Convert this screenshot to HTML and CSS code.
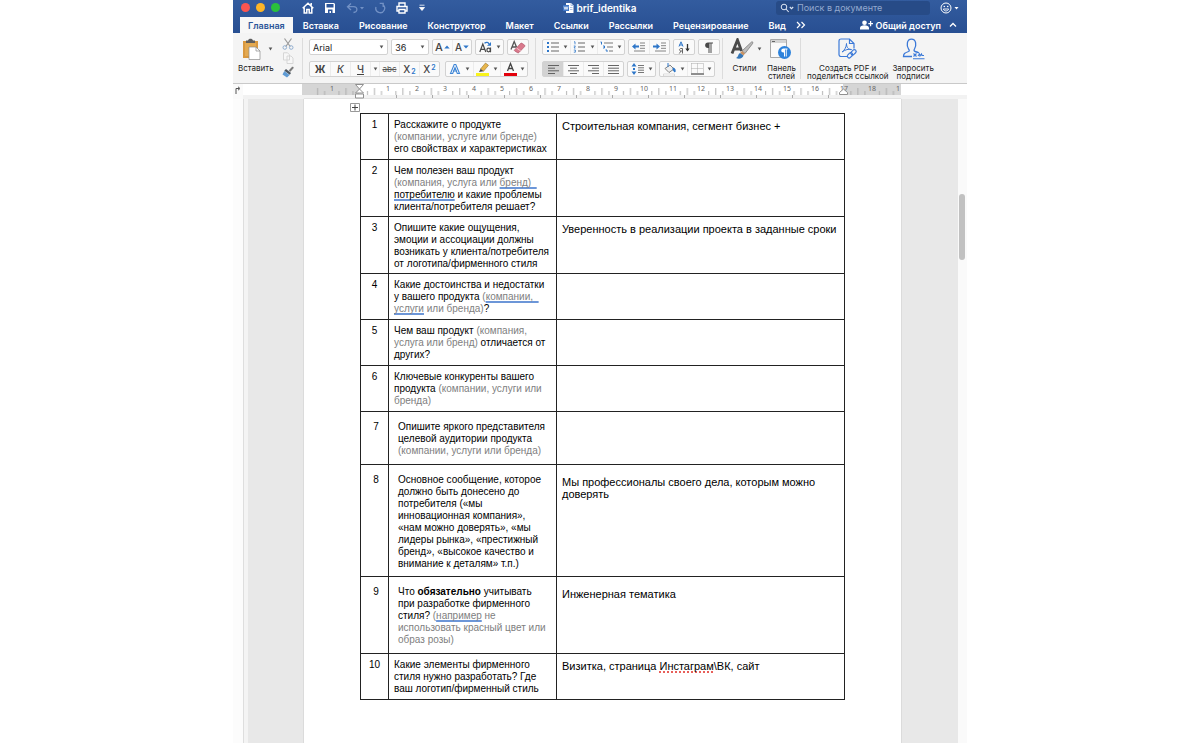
FILE: index.html
```html
<!DOCTYPE html>
<html lang="ru">
<head>
<meta charset="utf-8">
<meta name="viewport" content="width=device-width, initial-scale=1">
<title>brif_identika</title>
<link rel="stylesheet" href="styles.css">
</head>
<body>
<div class="window">
  <header class="chrome">
    <div class="titlebar">
      <div class="title-left">
        <div class="lights"><button class="light red" aria-label="Закрыть"></button><button class="light yellow" aria-label="Свернуть"></button><button class="light green" aria-label="Развернуть"></button></div>
        <div class="quick">
          <button aria-label="Домой"><svg width="12" height="12" viewBox="0 0 12 12"><path d="M.7 6.3 6 1.3l5.300 5M2.200 5.500v5.600h2.600V7.500h2.400v3.600h2.600V5.500M9.200 1v2.500" fill="none" stroke="#fff" stroke-width="1.500"/></svg></button>
          <button aria-label="Сохранить"><svg width="12" height="12" viewBox="0 0 12 12"><path d="M1 1h9l1 1v9H1z" fill="#fff"/><path d="M2.500 2h7v3.500h-7zM4 7.500h4.500V11H7V9H5.500v2H4z" fill="#2d569b"/></svg></button>
          <button class="undo" aria-label="Отменить"><svg width="18" height="12" viewBox="0 0 18 12"><path d="M5 1.500 1.500 4.700 5 8M2 4.700h5.500c4.500 0 4.500 5.800 0 5.800" fill="none" stroke="#7291c5" stroke-width="1.300"/><path d="M14 5h4l-2 2.500z" fill="#7291c5"/></svg></button>
          <button aria-label="Повторить"><svg width="12" height="12" viewBox="0 0 12 12"><path d="M3.500 2.500A4.400 4.400 0 1 0 10 5M6.300 1.300H2.800V5" fill="none" stroke="#7291c5" stroke-width="1.300" transform="matrix(-1 0 0 1 12 0)"/></svg></button>
          <button aria-label="Печать"><svg width="12" height="12" viewBox="0 0 12 12"><path d="M3 4V1h6v3M3 9H1V4.500h10V9H9M3 7.500h6V11H3z" fill="none" stroke="#fff" stroke-width="1.400"/></svg></button>
          <button aria-label="Настроить панель"><svg width="8" height="8" viewBox="0 0 8 8"><path d="M1.500 1.200h5M1.500 3.500h5L4 6.500z" fill="#fff" stroke="#fff" stroke-width=".8"/></svg></button>
        </div>
      </div>
      <div class="doc-title">
        <svg width="11" height="12" viewBox="0 0 11 12"><path d="M3 1h5l2.500 2.500V11H3z" fill="#fff"/><path d="M8 1v2.500h2.500M7 5.500h2.500M7 7.500h2.500" fill="none" stroke="#9ab3dc" stroke-width=".8"/><path d="M0 3h6v6H0z" fill="#3f76c6"/><path d="m1 4.500 1 3 1-2.800 1 2.800 1-3" fill="none" stroke="#fff" stroke-width=".8"/></svg>
        <span>brif_identika</span>
      </div>
      <div class="title-right">
        <label class="search"><svg width="14" height="10" viewBox="0 0 14 10"><circle cx="4" cy="4" r="2.800" fill="none" stroke="#dfe7f4"/><path d="m6 6 2.700 3M9.800 4l1.700 1.700L13.200 4" fill="none" stroke="#dfe7f4" stroke-width="1.100"/></svg><input type="search" placeholder="Поиск в документе" aria-label="Поиск в документе"></label>
        <button aria-label="Отзыв"><svg width="19" height="12" viewBox="0 0 19 12"><circle cx="6" cy="6" r="5" fill="none" stroke="#fff"/><path d="M3.300 7c1 2.600 4.400 2.600 5.400 0z" fill="none" stroke="#fff" stroke-width=".9"/><circle cx="4.300" cy="4.500" r=".8" fill="#fff"/><circle cx="7.700" cy="4.500" r=".8" fill="#fff"/><path d="M14.500 5h4l-2 2.500z" fill="#fff"/></svg></button>
      </div>
    </div>
    <nav class="tabs">
      <button class="tab active">Главная</button><button class="tab">Вставка</button><button class="tab">Рисование</button><button class="tab">Конструктор</button><button class="tab">Макет</button><button class="tab">Ссылки</button><button class="tab">Рассылки</button><button class="tab">Рецензирование</button><button class="tab">Вид</button>
      <button class="more" aria-label="Ещё вкладки"><svg width="10" height="8" viewBox="0 0 10 8"><path d="m1 1 3 3-3 3M5.500 1l3 3-3 3" fill="none" stroke="#fff" stroke-width="1.200"/></svg></button>
      <button class="share"><svg width="13" height="10" viewBox="0 0 13 10"><circle cx="4.500" cy="2.700" r="2.300" fill="#fff"/><path d="M0 9.500V8c0-2 2-2.800 4.500-2.800S9 6 9 8v1.500zM10 1h1.200v2H13v1.200h-1.800v2H10v-2H8.300V3H10z" fill="#fff"/></svg>Общий доступ</button>
      <button class="fold" aria-label="Свернуть ленту"><svg width="8" height="6" viewBox="0 0 8 6"><path d="m1 4.500 3-3 3 3" fill="none" stroke="#fff" stroke-width="1.300"/></svg></button>
    </nav>
  </header>

  <svg class="defs" aria-hidden="true"><defs>
    <symbol id="arr" viewBox="0 0 5 4"><path d="M.7.500h3.600L2.500 3.500z" fill="#555"/></symbol>
  </defs></svg>

  <section class="ribbon" aria-label="Главная">
    <div class="group clip">
      <button class="big paste">
        <span class="pic"><svg width="20" height="22" viewBox="0 0 20 22"><path d="M1 3h15v17H1z" fill="#d9983f"/><path d="M3 5h11v13H3z" fill="#e3a951"/><path d="M4 5V2.500h2C6.500 0 10.500 0 11 2.500h2V5z" fill="#5d5d5d"/><path d="M7 9h7l4 4v8.500H7z" fill="#fff" stroke="#8b8b8b" stroke-width=".7"/><path d="M14 9v4h4" fill="none" stroke="#8b8b8b" stroke-width=".7"/></svg><svg class="arr"><use href="#arr"/></svg></span>
        <span>Вставить</span>
      </button>
      <div class="minis">
        <button aria-label="Вырезать"><svg width="12" height="12" viewBox="0 0 12 12"><path d="m2.500.5 5.700 8M9.500.5 3.800 8.500" stroke="#9b9b9b" stroke-width="1.200"/><circle cx="2.800" cy="9.500" r="1.800" fill="none" stroke="#91aed0"/><circle cx="9.200" cy="9.500" r="1.800" fill="none" stroke="#91aed0"/></svg></button>
        <button aria-label="Копировать"><svg width="12" height="12" viewBox="0 0 12 12"><path d="M1.500.8h4l2 2V8h-6zM5 4h4l2 2v5.500H5z" fill="#f7f7f7" stroke="#d2d2d2" stroke-width=".9"/></svg></button>
        <button aria-label="Формат по образцу"><svg width="12" height="12" viewBox="0 0 12 12"><path d="M7 4.500 10.500.8l1 1L8.300 5.500z" fill="#777" stroke="#666" stroke-width=".5"/><path d="m4 3 5 4-1.200 1.700-5.500-4z" fill="#4a5560"/><path d="m2.300 5 5.300 3.900L5 11.500.5 8.500z" fill="#5f9bd4"/></svg></button>
      </div>
    </div>

    <div class="group rows font">
      <div class="row">
        <label class="combo face"><select aria-label="Шрифт"><option>Arial</option></select><svg class="arr"><use href="#arr"/></svg></label>
        <label class="combo size"><select aria-label="Размер шрифта"><option>36</option></select><svg class="arr"><use href="#arr"/></svg></label>
        <div class="set"><button class="narrow ltr large" aria-label="Увеличить">A<svg width="6" height="4" viewBox="0 0 6 4"><path d="M.3 3.500 3 .5l2.700 3z" fill="#2d76c9"/></svg></button><button class="narrow ltr" aria-label="Уменьшить">A<svg width="6" height="4" viewBox="0 0 6 4"><path d="M.3.500h5.400L3 3.500z" fill="#2d76c9"/></svg></button></div>
        <div class="set"><button class="menu" aria-label="Регистр"><svg width="14" height="12" viewBox="0 0 14 12"><path d="M.8 11 3.800 3l3 8M1.900 8.300h3.800" fill="none" stroke="#4a4a4a" stroke-width="1.200"/><ellipse cx="9.600" cy="9" rx="1.700" ry="1.800" fill="none" stroke="#4a4a4a" stroke-width="1.200"/><path d="M11.500 6.500v4.800" fill="none" stroke="#4a4a4a" stroke-width="1.200"/><path d="M5.500 2.300c2-1.500 3.500-1 4.500.5" fill="none" stroke="#2d76c9" stroke-width="1.400"/><path d="M12 1v3.800H8z" fill="#2d76c9"/></svg><svg class="arr"><use href="#arr"/></svg></button></div>
        <div class="set"><button class="plain" aria-label="Очистить формат"><svg width="16" height="14" viewBox="0 0 16 14"><path d="M1 9.500 4.200 1.500l2.500 6M2 7h4" fill="none" stroke="#555" stroke-width="1.300"/><path d="m4.500 10 6-6.500c.5-.5 1-.5 1.500-.2L14.500 5c.5.500.5 1 .2 1.500L9 12.500c-.5.500-1 .5-1.500.2L4.700 11c-.4-.3-.5-.6-.2-1z" fill="#d9798c" stroke="#a84e62" stroke-width=".6"/><path d="m6.500 8 4.300 3" stroke="#f4c3cc"/></svg></button></div>
      </div>
      <div class="row">
        <div class="set"><button class="plain ltr"><b>Ж</b></button><button class="plain ltr"><i>К</i></button><button class="plain ltr"><u>Ч</u></button><button class="slim" aria-label="Вид подчёркивания"><svg class="arr"><use href="#arr"/></svg></button><button class="plain strike"><s>abc</s></button><button class="plain ltr">X<sub>2</sub></button><button class="plain ltr">X<sup>2</sup></button></div>
        <div class="set"><button class="menu" aria-label="Эффекты текста"><svg width="13" height="12" viewBox="0 0 13 12"><path d="M1.500 10.500 5.200 1.500h1.600l3.700 9H8.300L6 4.500l-2.300 6z" fill="#fff" stroke="#3f86d6" stroke-width="1.100"/><path d="M4 8h4" stroke="#3f86d6"/></svg><svg class="arr"><use href="#arr"/></svg></button><button class="menu" aria-label="Цвет выделения"><svg width="14" height="14" viewBox="0 0 14 14"><path d="M0 11h13v3H0z" fill="#f8f31c"/><path d="m4.500 7 5-6 3 2.300-5 6z" fill="#e8b64d" stroke="#806020" stroke-width=".5"/><path d="M4.500 7 3 10l4.500-.7z" fill="#444"/></svg><svg class="arr"><use href="#arr"/></svg></button><button class="menu" aria-label="Цвет текста"><svg width="13" height="14" viewBox="0 0 13 14"><path d="M0 11h13v3H0z" fill="#e3000b"/><path d="m3.500 9 3-7.500 3 7.500M4.500 6.500h4" fill="none" stroke="#444" stroke-width="1.300"/></svg><svg class="arr"><use href="#arr"/></svg></button></div>
      </div>
    </div>

    <div class="group rows para">
      <div class="row">
        <div class="set"><button class="menu" aria-label="Маркеры"><svg width="14" height="12" viewBox="0 0 14 12"><path d="M1 1h2v2H1zM1 5h2v2H1zM1 9h2v2H1z" fill="#2d76c9"/><path d="M5 2h8M5 6h8M5 10h8" stroke="#666"/></svg><svg class="arr"><use href="#arr"/></svg></button><button class="menu" aria-label="Нумерация"><svg width="14" height="12" viewBox="0 0 14 12"><path d="M1 .8h1v2.500M.8 5h1.600L1 7h1.500M.8 9h1.600v2.200H.8" fill="none" stroke="#2d76c9" stroke-width=".8"/><path d="M5 2h7M5 6h7M5 10h7" stroke="#666"/></svg><svg class="arr"><use href="#arr"/></svg></button><button class="menu" aria-label="Многоуровневый список"><svg width="14" height="12" viewBox="0 0 14 12"><path d="M.5 1h1v2.500M3 5h1.500v2H3M5.500 9H7v2" fill="none" stroke="#2d76c9"/><path d="M4 2h9M7 6h6M9 10h4" stroke="#777"/></svg><svg class="arr"><use href="#arr"/></svg></button></div>
        <div class="set"><button class="plain" aria-label="Уменьшить отступ"><svg width="14" height="10" viewBox="0 0 14 10"><path d="M8 1h5M8 3.700h5M8 6.300h5M2 9h11" stroke="#777" stroke-width=".9"/><path d="m0 4.500 3.500-3v2H7v2H3.500v2z" fill="#2d76c9"/></svg></button><button class="plain" aria-label="Увеличить отступ"><svg width="14" height="10" viewBox="0 0 14 10"><path d="M8 1h5M8 3.700h5M8 6.300h5M2 9h11" stroke="#777" stroke-width=".9"/><path d="M7 4.500 3.500 1.500v2H0v2h3.500v2z" fill="#2d76c9"/></svg></button></div>
        <div class="set"><button class="plain" aria-label="Сортировка"><svg width="13" height="13" viewBox="0 0 13 13"><path d="M1 5.500 3 .8l2 4.700M1.500 4h3" fill="none" stroke="#2d76c9"/><path d="M4.500 12.500v-5H3c-2 0-2 2.500 0 2.500h1.500M3 10l-1.700 2.500" fill="none" stroke="#666"/><path d="M9.500 3v6" stroke="#333" stroke-width="1.300"/><path d="M7.300 7.500h4.400L9.500 10.500z" fill="#333"/></svg></button></div>
        <div class="set"><button class="plain" aria-label="Непечатаемые знаки"><svg width="10" height="11" viewBox="0 0 10 11"><path d="M9 .5H4C.2.5.2 6 4 6h.5v5h1V1.500h1V11h1V1.500H9z" fill="#4a4a4a"/></svg></button></div>
      </div>
      <div class="row">
        <div class="set"><button class="plain on" aria-label="По левому краю"><svg width="11" height="9" viewBox="0 0 11 9"><path d="M0 .500h11M0 3.200h7M0 5.800h11M0 8.500h7" stroke="#555" stroke-width=".9"/></svg></button><button class="plain" aria-label="По центру"><svg width="11" height="9" viewBox="0 0 11 9"><path d="M0 .500h11M2 3.200h7M0 5.800h11M2 8.500h7" stroke="#555" stroke-width=".9"/></svg></button><button class="plain" aria-label="По правому краю"><svg width="11" height="9" viewBox="0 0 11 9"><path d="M0 .500h11M4 3.200h7M0 5.800h11M4 8.500h7" stroke="#555" stroke-width=".9"/></svg></button><button class="plain" aria-label="По ширине"><svg width="11" height="9" viewBox="0 0 11 9"><path d="M0 .500h11M0 3.200h11M0 5.800h11M0 8.500h11" stroke="#555" stroke-width=".9"/></svg></button></div>
        <div class="set"><button class="menu" aria-label="Интервал"><svg width="14" height="12" viewBox="0 0 14 12"><path d="M3 0 5.500 3.500h-5zM3 12 .5 8.500h5zM2 5h2v2H2z" fill="#2d76c9"/><path d="M7 2.500h6M7 4.800h6M7 7.200h6M7 9.500h6" stroke="#666" stroke-width=".9"/></svg><svg class="arr"><use href="#arr"/></svg></button></div>
        <div class="set"><button class="menu" aria-label="Заливка"><svg width="14" height="13" viewBox="0 0 14 13"><path d="m2 5.500 5-3.500 4 4-5 3.500z" fill="#eee" stroke="#777" stroke-width=".9"/><path d="M5 4V0M10 5c2 0 2.500 2 2 4-1.500-.5-2-2-2-4z" stroke="#2d76c9" fill="#2d76c9"/><path d="M.5 11h11v2H.5z" fill="#fff" stroke="#bbb" stroke-width=".5"/></svg><svg class="arr"><use href="#arr"/></svg></button><button class="menu" aria-label="Границы"><svg width="13" height="12" viewBox="0 0 13 12"><path d="M.500.500h12M.500.500v10M12.500.500v10M6.500.500v10M.500 5.500h12" fill="none" stroke="#aaa" stroke-dasharray="1 1"/><path d="M0 11h13" stroke="#444" stroke-width="1.200"/></svg><svg class="arr"><use href="#arr"/></svg></button></div>
      </div>
    </div>

    <div class="group styles">
      <button class="big st"><span class="pic"><svg width="24" height="22" viewBox="0 0 24 22"><path d="M2 15.500 7.500 2l4 11M4 11h6.500" fill="none" stroke="#4a4a4a" stroke-width="2.800"/><path d="m12 13 9.500-9c1.500-.5 1.700.5 1 1.700L15 15.500z" fill="#bdbdbd" stroke="#707070" stroke-width=".7"/><path d="m12 13 3 2.500-1.500 2-3.500-2.500z" fill="#c99262"/><path d="M10 15c-2 1-1.500 4-4 5 3 1.500 7 .5 7.500-2.500z" fill="#3477b8"/></svg><svg class="arr"><use href="#arr"/></svg></span><span>Стили</span></button>
      <button class="big pane"><span class="pic"><svg width="22" height="22" viewBox="0 0 22 22"><path d="M.5 1.500h16v18H.5z" fill="#fafafa" stroke="#a8a8a8"/><path d="M1 2h15v3H1z" fill="#d4d4d4"/><path d="M2 3.500h3" stroke="#666"/><circle cx="14.500" cy="14.500" r="6.500" fill="#2c82dc"/><path d="M17.500 10.500h-4c-3 0-3 4 0 4h.5v4h1v-7h.8v7h.9v-7h.8z" fill="#fff"/></svg></span><span>Панель<br>стилей</span></button>
    </div>

    <div class="group adobe">
      <button class="big pdf"><span class="pic"><svg width="20" height="22" viewBox="0 0 20 22"><path d="M9 18.500H3c-1 0-2-.7-2-2V3c0-1.300 1-2 2-2h8.500L16 5.500v5M11.500 1v4.500H16" fill="none" stroke="#3b79d8" stroke-width="1.200"/><path d="M4 14c2-1 4.500-5 4.500-8.500 0 4 2 6.500 5 6-3-.8-6 .2-9.500 2.500z" fill="none" stroke="#3b79d8"/><g fill="none" stroke="#3b79d8" stroke-width="1.200"><rect x="9" y="15.500" width="6" height="3.600" rx="1.800" transform="rotate(-45 12 17.300)"/><rect x="12.500" y="12.500" width="6" height="3.600" rx="1.800" transform="rotate(-45 15.500 14.300)"/></g></svg></span><span>Создать PDF и<br>поделиться ссылкой</span></button>
      <button class="big sign"><span class="pic"><svg width="23" height="22" viewBox="0 0 23 22"><path d="M10 18.500H1.500c0-3 1-3.500 5-5 1-.5 1-1.500 0-2.500C4.500 8 4.500 1.200 9.500 1.200S14.500 8 12.500 11c-.8 1.200-.5 2 .5 2.500 1.500.4 3 .8 4 1.500" fill="none" stroke="#3b79d8" stroke-width="1.300"/><path d="m11.500 15.500 3 3m0-3-3 3M16 18l1.500-2 .5 2 1.500-2 .5 1.500H22M11 20.800h11.500" fill="none" stroke="#3b79d8" stroke-width="1.100"/></svg></span><span>Запросить<br>подписи</span></button>
    </div>
  </section>

  <div class="ruler">
    <div class="tabstop"><svg width="6" height="8" viewBox="0 0 6 8"><path d="M1 8V2.500h3M3 .800l2 1.700-2 1.700" fill="none" stroke="#555"/></svg></div>
    <div class="scale">
      <svg width="599" height="16" viewBox="0 0 599 16">
        <defs><pattern id="ticks" x="58" width="28.440" height="11" patternUnits="userSpaceOnUse"><path d="M7.500 7v4M14.500 4v7M21.500 7v4" stroke="#a8a8a8" stroke-width=".9"/></pattern>
        <pattern id="tabs" x="22" y="11" width="36" height="5" patternUnits="userSpaceOnUse"><path d="M.5 0v3" stroke="#aaa"/></pattern></defs>
        <rect width="599" height="11" fill="#fff"/><rect width="57" height="11" fill="#d5d5d5"/><rect x="541" width="58" height="11" fill="#d5d5d5"/>
        <rect x="14" width="585" height="11" fill="url(#ticks)"/><rect x="92" y="11" width="450" height="4" fill="url(#tabs)"/>
        <g class="nums"><text x="30" y="7">1</text><text x="86" y="7">1</text><text x="115" y="7">2</text><text x="143" y="7">3</text><text x="172" y="7">4</text><text x="200" y="7">5</text><text x="229" y="7">6</text><text x="257" y="7">7</text><text x="286" y="7">8</text><text x="314" y="7">9</text><text x="342" y="7">10</text><text x="371" y="7">11</text><text x="399" y="7">12</text><text x="428" y="7">13</text><text x="456" y="7">14</text><text x="485" y="7">15</text><text x="513" y="7">16</text><text x="542" y="7">17</text><text x="570" y="7">18</text><text x="596" y="7">1</text></g>
        <path d="M53.500.500h8L57.500 5zM57.500 5l4 4h-8zM53.500 10h8v4h-8z" fill="#fff" stroke="#909090"/><path d="m541.500 5 4 3.500v2h-8v-2z" fill="#fff" stroke="#909090"/>
      </svg>
    </div>
  </div>

  <main class="work">
    <div class="vruler"></div>
    <div class="desk">
      <article class="page">
        <svg class="handle" width="10" height="9" viewBox="0 0 10 9"><path d="M.500.500h9v8h-9z" fill="#fff" stroke="#999"/><path d="M5 1.500v6M2 4.500h6" stroke="#444"/></svg>
        <table class="brief">
          <colgroup><col class="c-num"><col class="c-q"><col></colgroup>
          <tbody>
          <tr class="l3"><td>1</td><td>Расскажите о продукте<br><em>(компании, услуге или бренде)</em><br>его свойствах и характеристиках</td><td>Строительная компания, сегмент бизнес +</td></tr>
          <tr class="l4"><td>2</td><td>Чем полезен ваш продукт<br><em>(компания, услуга или <span class="gram">бренд)&nbsp;&nbsp;</span></em><br><span class="gram">потребителю</span> и какие проблемы<br>клиента/потребителя решает?</td><td></td></tr>
          <tr class="l4"><td>3</td><td>Опишите какие ощущения,<br>эмоции и ассоциации должны<br>возникать у клиента/потребителя<br>от логотипа/фирменного стиля</td><td>Уверенность в реализации проекта в заданные сроки</td></tr>
          <tr class="l3"><td>4</td><td>Какие достоинства и недостатки<br>у вашего продукта <em>(<span class="gram">компании,&nbsp;&nbsp;</span></em><br><em><span class="gram">услуги</span> или бренда)</em>?</td><td></td></tr>
          <tr class="l3"><td>5</td><td>Чем ваш продукт <em>(компания,<br>услуга или бренд)</em> отличается от<br>других?</td><td></td></tr>
          <tr class="l3"><td>6</td><td>Ключевые конкуренты вашего<br>продукта <em>(компании, услуги или<br>бренда)</em></td><td></td></tr>
          <tr class="inset"><td>7</td><td>Опишите яркого представителя<br>целевой аудитории продукта<br><em>(компании, услуги или бренда)</em></td><td></td></tr>
          <tr class="inset l8"><td>8</td><td>Основное сообщение, которое<br>должно быть донесено до<br>потребителя («мы<br>инновационная компания»,<br>«нам можно доверять», «мы<br>лидеры рынка», «престижный<br>бренд», «высокое качество и<br>внимание к деталям» т.п.)</td><td>Мы профессионалы своего дела, которым можно доверять</td></tr>
          <tr class="inset l5"><td>9</td><td>Что <b>обязательно</b> учитывать<br>при разработке фирменного<br>стиля? <em>(<span class="gram">например</span> не<br>использовать красный цвет или<br>образ розы)</em></td><td>Инженерная тематика</td></tr>
          <tr class="l3"><td>10</td><td>Какие элементы фирменного<br>стиля нужно разработать? Где<br>ваш логотип/фирменный стиль</td><td>Визитка, страница <span class="spell">Инстаграм</span>\ВК, сайт</td></tr>
          </tbody>
        </table>
      </article>
    </div>
    <div class="scroll"><div class="thumb"></div></div>
  </main>
</div>
</body>
</html>
```

FILE: styles.css
```css
* { box-sizing: border-box; }
body { margin: 0; background: #fff; font-family: Inter, "Noto Sans", sans-serif; font-size: 8px; color: #222; }
button { margin: 0; padding: 0; border: 0; background: none; font: inherit; color: inherit; display: flex; align-items: center; justify-content: center; }
svg { display: block; flex: none; }
.defs { position: absolute; width: 0; height: 0; }
.arr { width: 5px; height: 4px; }

.window { max-width: 734px; min-height: 100vh; margin: 0 auto; display: flex; flex-direction: column; overflow: hidden; }

.chrome { background: linear-gradient(#335c9f, #284f92); color: #fff; }
.titlebar { display: grid; grid-template-columns: 1fr auto 1fr; align-items: center; height: 15px; }
.title-left, .title-right { display: flex; align-items: center; }
.title-left { padding-left: 8px; gap: 22px; }
.title-right { justify-content: flex-end; padding-right: 8px; gap: 10px; }
.lights { display: flex; gap: 6px; }
.light { width: 9px; height: 9px; border-radius: 50%; }
.red { background: #fc5550; }
.yellow { background: #fdb527; }
.green { background: #2ac03c; }
.quick { display: flex; align-items: center; gap: 10px; }
.doc-title { display: flex; align-items: center; gap: 2px; font-size: 10px; font-weight: 600; line-height: 12px; }
.search { display: flex; align-items: center; gap: 3px; width: 154px; height: 14px; padding: 0 4px; border-radius: 3px; background: #274b87; }
.search input { min-width: 0; flex: 1; border: 0; padding: 0; background: none; color: #fff; font: inherit; font-size: 9px; outline: 0; }
.search input::placeholder { color: #93a9cf; opacity: 1; }

.tabs { display: flex; align-items: stretch; height: 18px; padding: 2px 10px 0 7px; font-size: 9px; font-weight: 600; }
.tab { padding: 0 10px; }
.tab.active { padding: 0 8px; background: #f7f7f7; color: #2b5599; }
.share { margin-left: auto; gap: 3px; }
.fold { margin-left: 8px; }

.ribbon { display: flex; height: 51px; background: #f4f4f4; border-bottom: 1px solid #c9c9c9; padding: 5px 0 4px; }
.group { display: flex; padding: 0 6px; border-right: 1px solid #dcdcdc; }
.group:last-child { border: 0; }
.big { flex-direction: column; justify-content: flex-start; line-height: 8px; text-align: center; white-space: nowrap; }
.pic { display: flex; align-items: center; gap: 3px; height: 22px; margin-bottom: 4px; }
.clip { width: 70px; padding: 0 0 0 5px; gap: 8px; }
.paste .pic { padding-left: 4px; gap: 6px; }
.minis { display: flex; flex-direction: column; justify-content: space-between; padding-bottom: 1px; }
.rows { flex-direction: column; gap: 6px; padding-top: 1px; }
.row { display: flex; gap: 3px; }
.set, .combo { display: flex; height: 16px; border: 1px solid #d2d2d2; border-radius: 2px; background: #fafafa; }
.set button { gap: 3px; }
.set button + button { border-left: 1px solid #ececec; }
.combo { align-items: center; background: #fff; padding-right: 3px; }
.combo select { flex: 1; min-width: 0; appearance: none; border: 0; background: none; padding: 0 3px; font: inherit; font-size: 9px; color: #222; }
.face { width: 80px; }
.size { width: 38px; }
.font { width: 233px; }
.font .row + .row { gap: 5px; }
.para { width: 187px; }
.slim { width: 9px; }
.narrow { width: 19px; }
.plain { width: 20px; }
.menu { width: 27px; }
.on { background: #d2d2d2; }
.set .ltr { gap: 1px; font-size: 10px; font-weight: 500; color: #444; }
.set .large { font-size: 11px; }
.strike { font-size: 8px; color: #555; }
.ltr sub, .ltr sup { font-size: 7px; line-height: 7px; font-weight: 600; color: #2d76c9; }
.ltr sub { align-self: flex-end; padding-bottom: 1px; }
.ltr sup { align-self: flex-start; padding-top: 2px; }
.styles { width: 78px; padding: 0 0 0 4px; gap: 5px; }
.st .pic { padding-left: 3px; }
.adobe { padding: 0 0 0 6px; gap: 4px; }

.ruler { display: flex; height: 15px; background: #f2f2f2; }
.tabstop { width: 10px; padding: 2px 0 0 2px; background: #fafafa; }
.scale { flex: 1; display: flex; justify-content: center; padding-right: 7px; background: linear-gradient(#fff 11px, #f2f2f2 11px); }
.nums { font: 7px "Noto Sans", sans-serif; fill: #666; text-anchor: middle; }

.work { flex: 1; display: flex; }
.vruler { width: 15px; background: linear-gradient(90deg, #fcfcfc 10px, #dedede 10px, #dedede 11px, #f4f4f4 11px); }
.desk { flex: 1; min-width: 0; display: flex; justify-content: center; padding-right: 1px; background: #e8e8e8; }
.page { width: 597px; padding: 4px 56px 44px; background: #fff; box-shadow: 0 0 1px #999; }
.handle { margin-left: -10px; }
.scroll { width: 9px; padding: 95px 2px 0 1px; background: #fafafa; }
.thumb { height: 66px; border-radius: 3px; background: #c1c1c1; }

.brief { width: 100%; margin-top: 1px; border-collapse: collapse; table-layout: fixed; font-family: "Liberation Sans", Arial, sans-serif; font-size: 10px; line-height: 12px; color: #000; }
.c-num { width: 28px; }
.c-q { width: 168px; }
.brief td { border: 1px solid #222; padding: 5px 0 0 5px; vertical-align: top; white-space: nowrap; }
.brief td:first-child { padding-left: 0; text-align: center; }
.brief td:last-child { font-size: 11px; padding-top: 6px; white-space: normal; }
.brief em { font-style: normal; color: #808080; }
.l3 { height: 46px; }
.l4 { height: 57px; }
.inset { height: 53px; }
.inset.l8 { height: 112px; }
.inset.l5 { height: 77px; }
.brief .inset td { padding-top: 9px; padding-left: 9px; }
.brief .inset td:first-child { padding-left: 3px; }
.brief .inset td:last-child { padding-left: 5px; padding-top: 11px; }
.gram { text-decoration: underline 2px #6c96d8; text-decoration-skip-ink: none; text-underline-offset: 1px; }
.spell { text-decoration: underline dotted 2px #e8605a; text-decoration-skip-ink: none; text-underline-offset: 1px; }
```
